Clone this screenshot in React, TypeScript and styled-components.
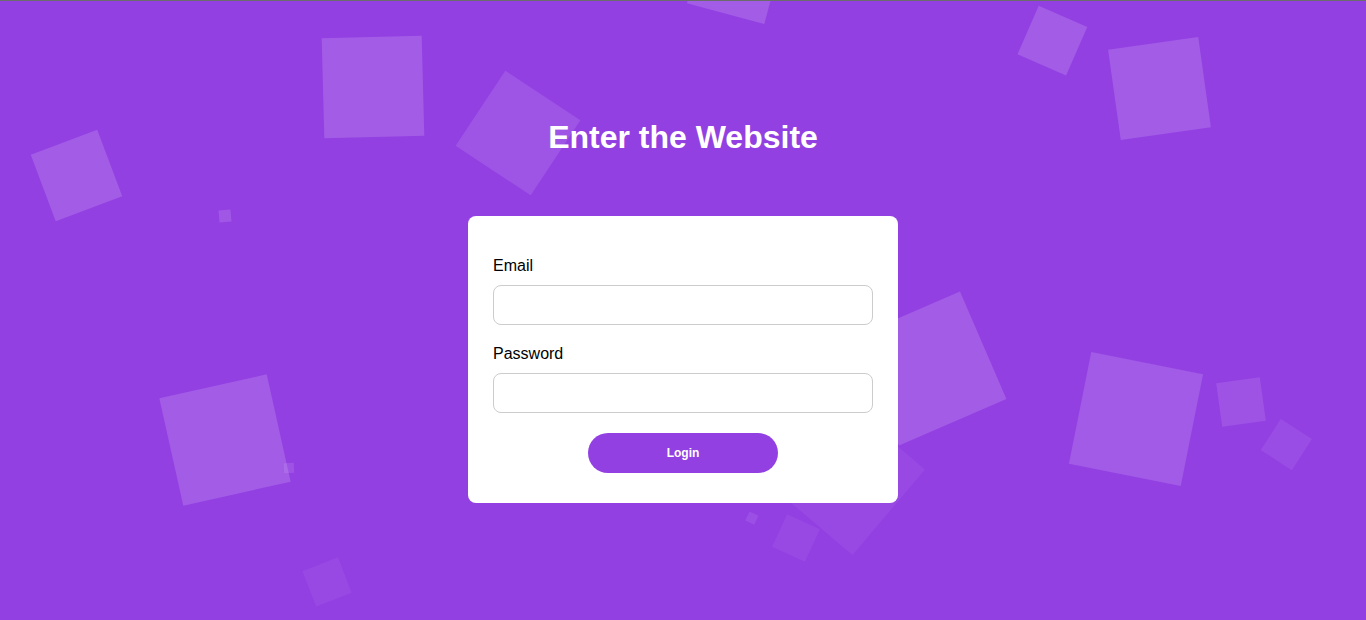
import React from "react";
import styled, { createGlobalStyle } from "styled-components";

const GlobalStyle = createGlobalStyle`
  html, body {
    margin: 0;
    padding: 0;
  }
  body {
    font-family: "Liberation Sans", Arial, sans-serif;
  }
  * {
    box-sizing: border-box;
  }
`;

const Page = styled.div`
  position: relative;
  min-height: 100vh;
  background: #9340e2;
  border-top: 1px solid #6b6b6b;
  overflow: hidden;
  display: flex;
  align-items: center;
  justify-content: center;
`;

const ShapeLayer = styled.div`
  position: absolute;
  inset: 0;
  overflow: hidden;
  pointer-events: none;
  z-index: 0;
`;

const Square = styled.span<{ $x: number; $y: number; $size: number; $rot: number; $alpha: number }>`
  position: absolute;
  display: block;
  left: ${(p) => p.$x - p.$size / 2}px;
  top: ${(p) => p.$y - p.$size / 2 - 1}px;
  width: ${(p) => p.$size}px;
  height: ${(p) => p.$size}px;
  transform: rotate(${(p) => p.$rot}deg);
  background: rgba(255, 255, 255, ${(p) => p.$alpha});
`;

const Content = styled.main`
  position: relative;
  z-index: 1;
  display: flex;
  flex-direction: column;
  align-items: center;
`;

const Title = styled.h1`
  margin: 0 0 60px;
  color: #ffffff;
  font-size: 32px;
  font-weight: bold;
  line-height: normal;
`;

const Card = styled.form`
  width: 430px;
  background: #ffffff;
  border-radius: 8px;
  padding: 41px 25px 30px;
`;

const Field = styled.div`
  margin-bottom: 20px;
`;

const Label = styled.label`
  display: block;
  margin-bottom: 10px;
  color: #000000;
  font-size: 16px;
  line-height: normal;
`;

const Input = styled.input`
  display: block;
  width: 100%;
  height: 40px;
  border: 1px solid #cccccc;
  border-radius: 8px;
  padding: 0 10px;
  font-family: "Liberation Sans", Arial, sans-serif;
  font-size: 14px;
  background: #ffffff;
  outline: none;
`;

const LoginButton = styled.button`
  display: block;
  margin: 0 auto;
  width: 190px;
  height: 40px;
  border: none;
  border-radius: 20px;
  background: #9340e2;
  color: #ffffff;
  font-family: "Liberation Sans", Arial, sans-serif;
  font-size: 12px;
  font-weight: bold;
  cursor: pointer;
`;

type Shape = { x: number; y: number; size: number; rot: number; alpha: number };

const shapes: Shape[] = [
  { x: 373, y: 86.7, size: 100, rot: -1.5, alpha: 0.15 },
  { x: 518, y: 133, size: 90, rot: 33.5, alpha: 0.11 },
  { x: 76.2, y: 175, size: 71, rot: -20.6, alpha: 0.15 },
  { x: 225, y: 216, size: 12, rot: -5, alpha: 0.12 },
  { x: 736, y: -25, size: 80, rot: 15, alpha: 0.15 },
  { x: 1052.5, y: 40, size: 52.5, rot: 23.6, alpha: 0.15 },
  { x: 1159.5, y: 88.6, size: 91, rot: -8, alpha: 0.15 },
  { x: 929.7, y: 368.7, size: 117, rot: -23.4, alpha: 0.15 },
  { x: 845.6, y: 476, size: 112, rot: 40.3, alpha: 0.05 },
  { x: 1135.9, y: 419, size: 114, rot: 11.3, alpha: 0.14 },
  { x: 1240.8, y: 402.4, size: 44, rot: -7.9, alpha: 0.1 },
  { x: 1286.5, y: 444.1, size: 36.5, rot: 32.8, alpha: 0.07 },
  { x: 752.2, y: 518, size: 9.5, rot: 26, alpha: 0.08 },
  { x: 795.6, y: 537.5, size: 36, rot: 24.6, alpha: 0.05 },
  { x: 224.9, y: 439.8, size: 110, rot: -12.6, alpha: 0.15 },
  { x: 289.2, y: 468, size: 10.3, rot: -3, alpha: 0.1 },
  { x: 327, y: 581.7, size: 37.6, rot: -21.4, alpha: 0.05 },
];

export default function App() {
  return (
    <>
      <GlobalStyle />
      <Page>
        <ShapeLayer>
          {shapes.map((s, i) => (
            <Square key={i} $x={s.x} $y={s.y} $size={s.size} $rot={s.rot} $alpha={s.alpha} />
          ))}
        </ShapeLayer>
        <Content>
          <Title>Enter the Website</Title>
          <Card onSubmit={(e) => e.preventDefault()}>
            <Field>
              <Label htmlFor="email">Email</Label>
              <Input id="email" type="email" />
            </Field>
            <Field>
              <Label htmlFor="password">Password</Label>
              <Input id="password" type="password" />
            </Field>
            <LoginButton type="submit">Login</LoginButton>
          </Card>
        </Content>
      </Page>
    </>
  );
}
